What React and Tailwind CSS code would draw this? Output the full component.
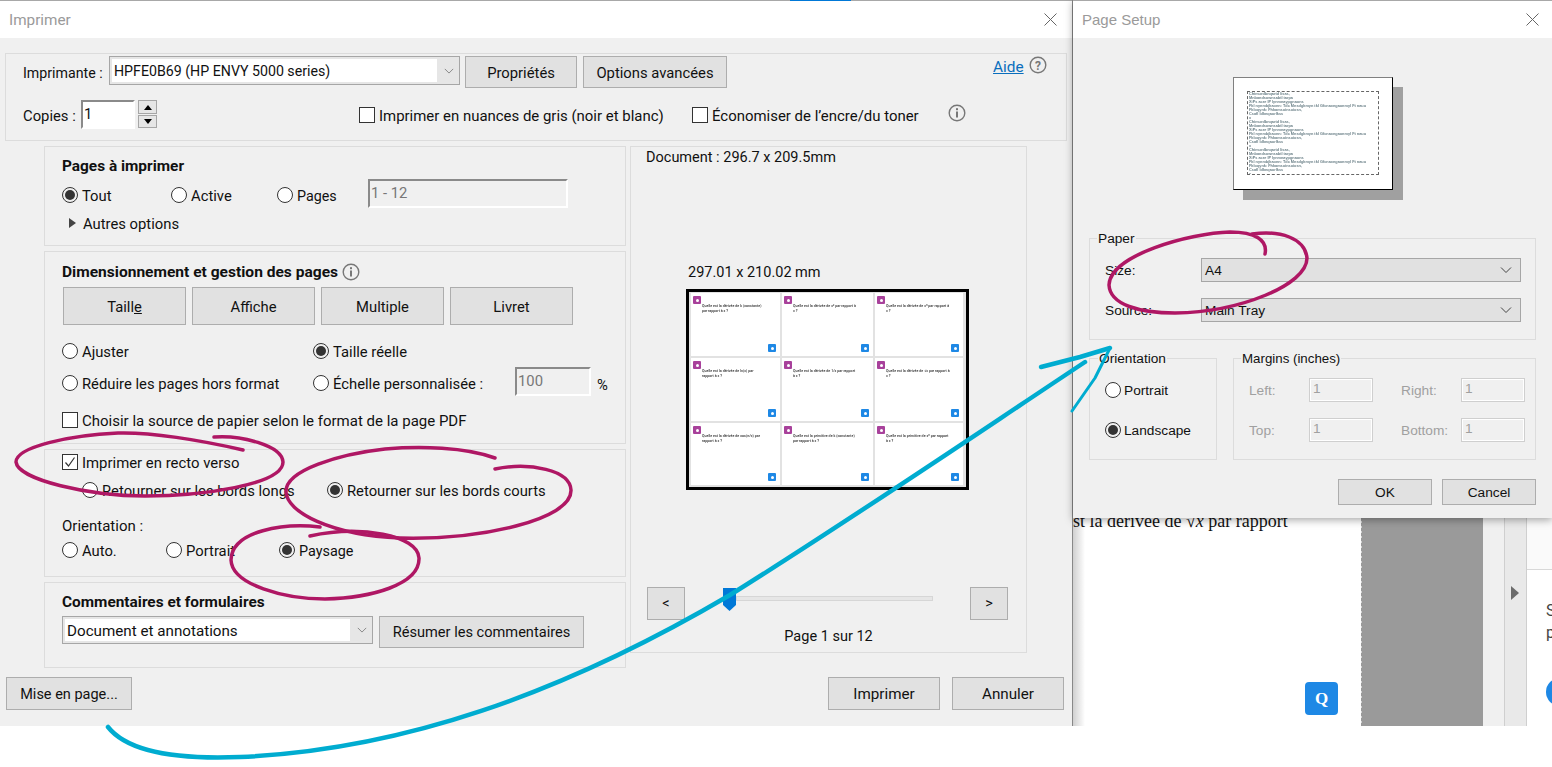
import React from 'react';

const Radio = ({ on, label, className = '', labelClass = 'ml-[4px] pt-[2px]' }) => (
  <div className={`flex items-center h-5 ${className}`}>
    <span className={`w-4 h-4 shrink-0 rounded-full border border-[#333] flex items-center justify-center ${on ? 'bg-[#f0f0f0]' : 'bg-white'}`}>
      {on && <span className="w-[10px] h-[10px] rounded-full bg-[#333]"></span>}
    </span>
    <span className={`whitespace-nowrap ${labelClass}`}>{label}</span>
  </div>
);

const Check = ({ on, label, className = '' }) => (
  <div className={`flex items-center h-5 ${className}`}>
    <span className="w-4 h-4 shrink-0 border border-[#333] bg-white flex items-center justify-center">
      {on && (
        <svg width="12" height="12" viewBox="0 0 12 12" fill="none" stroke="#333" strokeWidth="1.2">
          <path d="M1.5 6.5 L4.5 10 L10.5 1.5" />
        </svg>
      )}
    </span>
    <span className="ml-[4px] pt-[2px] whitespace-nowrap">{label}</span>
  </div>
);

const Btn = ({ className = '', children }) => (
  <button type="button" className={`shrink-0 box-border border border-[#adadad] bg-[#e1e1e1] text-[#111] flex items-center justify-center ${className}`}>
    {children}
  </button>
);

const Panel = ({ className = '', children }) => (
  <div className={`box-border border border-[#dcdcdc] pl-[17px] ${className}`}>{children}</div>
);

const Chevron = ({ color = '#555', w = 12 }) => (
  <svg width={w} height="8" viewBox="0 0 12 8" fill="none" stroke={color} strokeWidth="1">
    <path d="M1 1.5 L6 6.5 L11 1.5" />
  </svg>
);

const Close = () => (
  <svg width="13" height="13" viewBox="0 0 13 13" fill="none" stroke="#666" strokeWidth="1">
    <path d="M0.5 0.5 L12.5 12.5 M12.5 0.5 L0.5 12.5" />
  </svg>
);

const Info = ({ size = 18 }) => (
  <svg width={size} height={size} viewBox="0 0 18 18" fill="none" className="shrink-0">
    <circle cx="9" cy="9" r="7.8" stroke="#777" strokeWidth="1.4" />
    <rect x="8" y="7.5" width="2" height="6" fill="#777" />
    <rect x="8" y="4.2" width="2" height="2" fill="#777" />
  </svg>
);

const Combo = ({ className = '', inner, children }) => (
  <div className={`shrink-0 box-border border border-[#a6a6a6] bg-[#e6e6e6] flex items-center p-[2px] ${className}`}>
    <div className={`h-full bg-white flex items-center pl-[2px] pt-[2px] text-[#111] ${inner}`}>{children}</div>
    <div className="flex-1 flex justify-end pr-[3px]"><Chevron color="#777" w={10} /></div>
  </div>
);

const Field = ({ className = '', children }) => (
  <div className={`shrink-0 box-border border-2 border-t-[#8a8a8a] border-l-[#8a8a8a] border-r-white border-b-white pl-px leading-[25px] ${className}`}>
    {children}
  </div>
);

const SetupSelect = ({ children }) => (
  <div className="w-[320px] h-[24px] box-border border border-[#a6a6a6] bg-[#e1e1e1] flex items-center justify-between pl-[3px] pr-[8px]">
    <span className="pt-[2px]">{children}</span>
    <Chevron color="#444" />
  </div>
);

const MarginInput = () => (
  <div className="w-[64px] h-[24px] box-border border border-[#cfcfcf] outline-1 outline-white -outline-offset-2 pl-[3px] leading-[20px]">1</div>
);

const cards = [
  'Quelle est la dérivée de k (constante) par rapport à x ?',
  'Quelle est la dérivée de x² par rapport à x ?',
  'Quelle est la dérivée de xⁿ par rapport à x ?',
  'Quelle est la dérivée de ln(x) par rapport à x ?',
  'Quelle est la dérivée de 1/x par rapport à x ?',
  'Quelle est la dérivée de √x par rapport à x ?',
  'Quelle est la dérivée de cos(π/x) par rapport à x ?',
  'Quelle est la primitive de k (constante) par rapport à x ?',
  'Quelle est la primitive de xⁿ par rapport à x ?',
];

const Card = ({ text }) => (
  <div className="bg-white flex flex-col pl-[2px] pr-[4px] pt-[3px] pb-[4px]">
    <span className="w-2 h-2 shrink-0 bg-[#a8419b] rounded-[1px] flex items-center justify-center">
      <span className="w-[3px] h-[3px] rounded-full bg-white"></span>
    </span>
    <p className="ml-[9px] w-[64px] text-[3.6px] leading-[5px] text-[#333] font-medium blur-[0.3px]">{text}</p>
    <span className="mt-auto self-end w-2 h-2 shrink-0 bg-[#1e88e5] rounded-[1px] flex items-center justify-center">
      <span className="w-[3px] h-[3px] rounded-full bg-white"></span>
    </span>
  </div>
);

const sheetLines = [
  'Chimurdbnqartd lisas,',
  'Mnbandsownsabtl tarpa',
  'XiPs acre IP lynmnaypgnaons',
  'Fkl nynmbjkaonn: Tdc Mnsdgkmyn tkl Gfcnaxngaonmyl Ft nauu',
  'Fkloqynk: Fhkamsoinsoiosn,',
  'Csafl ldknqaorlkss',
];

const App = () => {
  return (
    <div className="relative w-[1552px] h-[767px] overflow-hidden bg-white font-['Roboto',sans-serif] text-[14.8px] text-[#111]">
      <div className="flex h-[726px]">
        {/* Imprimer */}
        <div className="w-[1072px] h-[726px] flex flex-col bg-[#f0f0f0]">
          <div className="h-px bg-[#a8a8a8] shrink-0"><div className="ml-[790px] w-[61px] h-px bg-[#0078d7]"></div></div>
          <div className="h-[37px] shrink-0 bg-white flex items-center justify-between pl-[9px] pr-[15px] text-[#9a9a9a]">
            <span className="text-[15.3px] pt-[2px]">Imprimer</span>
            <Close />
          </div>

          <div className="mt-[15px] ml-[5px] w-[1062px] h-[88px] shrink-0 box-border border border-[#dcdcdc] pl-[17px]">
            <div className="flex items-start h-[32px] mt-[2px]">
              <span className="w-[86px] h-[32px] leading-[34px] text-[14.2px]">Imprimante :</span>
              <Combo className="w-[351px] h-[29px] text-[14.2px]" inner="w-[325px]">HPFE0B69 (HP ENVY 5000 series)</Combo>
              <Btn className="ml-[5px] w-[112px] h-[32px] pt-[2px]">Propriétés</Btn>
              <Btn className="ml-[6px] w-[144px] h-[32px] pt-[2px]">Options avancées</Btn>
              <a href="#" className="ml-[266px] text-[15.4px] text-[#0a6ebd] underline">Aide</a>
              <span className="ml-[5px]"><svg width="18" height="18" viewBox="0 0 18 18" fill="none"><circle cx="9" cy="9" r="7.8" stroke="#777" strokeWidth="1.4" /><text x="9" y="13.5" textAnchor="middle" fontSize="12" fontWeight="700" fill="#777">?</text></svg></span>
            </div>
            <div className="flex items-start mt-[12px]">
              <span className="w-[58px] h-[29px] leading-[33px]">Copies :</span>
              <Field className="w-[54px] h-[29px] bg-white">1</Field>
              <div className="ml-[3px] w-[19px] h-[28px] flex flex-col gap-px">
                <span className="h-[14px] box-border border border-[#a6a6a6] bg-[#e6e6e6] flex items-center justify-center"><span className="w-0 h-0 border-x-[4px] border-x-transparent border-b-[5px] border-b-black"></span></span>
                <span className="h-[13px] box-border border border-[#a6a6a6] bg-[#e6e6e6] flex items-center justify-center"><span className="w-0 h-0 border-x-[4px] border-x-transparent border-t-[5px] border-t-black"></span></span>
              </div>
              <Check className="ml-[202px] mt-[5px] w-[333px] text-[14.95px]" label="Imprimer en nuances de gris (noir et blanc)" />
              <Check className="mt-[5px] w-[256px] text-[14.95px]" label="Économiser de l’encre/du toner" />
              <span className="mt-[4px]"><Info /></span>
            </div>
          </div>

          <div className="flex mt-[5px] ml-[44px]">
            <div className="w-[582px] flex flex-col gap-[5px]">
              <Panel className="h-[100px]">
                <h3 className="mt-[9px] h-5 leading-[21px] font-bold text-[15.4px]">Pages à imprimer</h3>
                <div className="mt-[3px] flex items-start h-[29px]">
                  <Radio on label="Tout" className="w-[109px] mt-[6px]" />
                  <Radio label="Active" className="w-[106px] mt-[6px]" />
                  <Radio label={<span className="text-[14.3px]">Pages</span>} className="w-[91px] mt-[6px]" />
                  <Field className="w-[200px] h-[29px] text-[#777]">1 - 12</Field>
                </div>
                <div className="mt-[5px] flex items-center h-5 pl-[7px]">
                  <span className="w-0 h-0 border-y-[5px] border-y-transparent border-l-[7px] border-l-[#444]"></span>
                  <span className="ml-[7px] pt-[2px]">Autres options</span>
                </div>
              </Panel>

              <Panel className="h-[193px]">
                <div className="mt-[10px] flex items-center h-5">
                  <h3 className="font-bold text-[15.55px] pt-px">Dimensionnement et gestion des pages</h3>
                  <span className="ml-[4px]"><Info /></span>
                </div>
                <div className="mt-[5px] ml-px flex gap-[6px]">
                  <Btn className="w-[123px] h-[38px] pt-[2px]"><span>Taill<u>e</u></span></Btn>
                  <Btn className="w-[123px] h-[38px] pt-[2px]">Affiche</Btn>
                  <Btn className="w-[123px] h-[38px] pt-[2px]">Multiple</Btn>
                  <Btn className="w-[123px] h-[38px] pt-[2px]">Livret</Btn>
                </div>
                <div className="mt-[16px] flex">
                  <Radio label="Ajuster" className="w-[251px]" />
                  <Radio on label="Taille réelle" />
                </div>
                <div className="mt-[6px] flex items-start h-[29px]">
                  <Radio label="Réduire les pages hors format" className="w-[251px] mt-[6px]" />
                  <Radio label="Échelle personnalisée :" className="w-[202px] mt-[6px]" />
                  <Field className="w-[76px] h-[29px] text-[#777]">100</Field>
                  <span className="ml-[6px] mt-[7px]">%</span>
                </div>
                <Check className="mt-[14px] text-[15px]" label="Choisir la source de papier selon le format de la page PDF" />
              </Panel>

              <Panel className="h-[128px]">
                <Check on className="mt-[2px] text-[14.9px]" label="Imprimer en recto verso" />
                <div className="mt-[8px] ml-[20px] flex">
                  <Radio label="Retourner sur les bords longs" className="w-[245px]" />
                  <Radio on label="Retourner sur les bords courts" />
                </div>
                <p className="mt-[15px] h-5 leading-[22px] text-[15px]">Orientation :</p>
                <div className="mt-[5px] flex">
                  <Radio label="Auto." className="w-[104px]" />
                  <Radio label="Portrait" className="w-[113px]" />
                  <Radio on label={<span className="text-[14.4px]">Paysage</span>} />
                </div>
              </Panel>

              <Panel className="h-[86px]">
                <h3 className="mt-[9px] h-5 leading-[21px] font-bold text-[15.4px]">Commentaires et formulaires</h3>
                <div className="mt-[4px] flex items-start">
                  <Combo className="w-[311px] h-[28px] text-[15.2px]" inner="w-[285px]">Document et annotations</Combo>
                  <Btn className="ml-[6px] w-[205px] h-[32px] pt-[2px] text-[14.6px]">Résumer les commentaires</Btn>
                </div>
              </Panel>
            </div>

            <div className="ml-[4px] w-[397px] h-[507px] box-border border border-[#dcdcdc] flex flex-col text-[14.5px]">
              <p className="pl-[15px] h-5 leading-[21px]">Document : 296.7 x 209.5mm</p>
              <p className="mt-[95px] pl-[57px] h-5 leading-[21px]">297.01 x 210.02 mm</p>
              <div className="mt-[7px] ml-[55px] w-[283px] h-[201px] box-border border-[3px] border-black bg-[#e2e2e2] grid grid-cols-[89px_91px_88px] grid-rows-[63px_63px_62px] gap-[2px] pl-[2px] pt-px">
                {cards.map((c) => <Card key={c} text={c} />)}
              </div>
              <div className="mt-[97px] flex items-start ml-[16px]">
                <Btn className="w-[38px] h-[33px]">&lt;</Btn>
                <svg width="13" height="23" viewBox="0 0 13 23" className="ml-[38px] mt-px shrink-0"><path d="M0 0 H13 V17 L6.5 23 L0 17 Z" fill="#0078d7" /></svg>
                <div className="mt-[9px] w-[197px] h-[5px] box-border border border-[#d6d6d6] bg-[#e6e6e6]"></div>
                <Btn className="ml-[37px] w-[38px] h-[33px]">&gt;</Btn>
              </div>
              <p className="mt-[6px] text-center h-5 leading-[21px]">Page 1 sur 12</p>
            </div>
          </div>

          <div className="mt-[9px] flex pl-[6px] pr-[8px]">
            <Btn className="w-[126px] h-[33px] pt-[2px] text-[14.5px]">Mise en page...</Btn>
            <Btn className="ml-auto w-[112px] h-[33px] pt-[2px] text-[15.2px]">Imprimer</Btn>
            <Btn className="ml-[12px] w-[112px] h-[33px] pt-[2px] text-[15.2px]">Annuler</Btn>
          </div>
        </div>

        {/* Page Setup */}
        <div className="w-[480px] h-[726px] flex flex-col border-l border-[#888] font-['Liberation_Sans',sans-serif] text-[13.7px]">
          <div className="relative z-10 h-[518px] shrink-0 flex flex-col bg-[#f0f0f0] shadow-[0_2px_8px_rgba(0,0,0,0.35)]">
            <div className="h-px bg-[#a8a8a8] shrink-0"></div>
            <div className="h-[37px] shrink-0 bg-white flex items-center justify-between pl-[9px] pr-[13px] text-[#9a9a9a]">
              <span className="text-[15px] pt-px">Page Setup</span>
              <Close />
            </div>
            <div className="mt-[39px] ml-[160px] w-[160px] h-[113px] shrink-0 box-border border border-t-[#808080] border-l-[#808080] border-r-black border-b-black bg-white shadow-[10px_10px_0_#a0a0a0] pl-[13px] pt-[13px]">
              <div className="w-[132px] h-[84px] box-border border border-dashed border-[#666] pl-px overflow-hidden text-[3.85px] leading-[4px] text-[#6b8088] font-bold whitespace-nowrap">
                {[0, 1, 2].map((g) => (
                  <div key={g} className="blur-[0.3px]">
                    {sheetLines.map((l) => <p key={l}>{l}</p>)}
                    <p>x</p>
                  </div>
                ))}
              </div>
            </div>

            <div className="relative mt-[48px] ml-[16px] w-[447px] h-[102px] shrink-0 box-border border border-[#dcdcdc] pl-[15px]">
              <span className="absolute -top-[8px] left-[7px] bg-[#f0f0f0] px-px leading-4">Paper</span>
              <div className="mt-[19px] flex items-center">
                <span className="w-[96px] pt-[2px]">Size:</span>
                <SetupSelect>A4</SetupSelect>
              </div>
              <div className="mt-[16px] flex items-center">
                <span className="w-[96px] pt-[2px]">Source:</span>
                <SetupSelect>Main Tray</SetupSelect>
              </div>
            </div>

            <div className="mt-[18px] ml-[16px] flex gap-[16px]">
              <div className="relative w-[128px] h-[102px] box-border border border-[#dcdcdc] pl-[15px]">
                <span className="absolute -top-[8px] left-[8px] bg-[#f0f0f0] px-px leading-4">Orientation</span>
                <Radio label="Portrait" className="mt-[21px]" labelClass="ml-[3px] pt-[2px]" />
                <Radio on label="Landscape" className="mt-[20px]" labelClass="ml-[3px] pt-[2px]" />
              </div>
              <div className="relative w-[303px] h-[102px] box-border border border-[#dcdcdc] pl-[15px] text-[#a0a0a0]">
                <span className="absolute -top-[8px] left-[7px] bg-[#f0f0f0] px-px leading-4 text-[13.3px] text-[#111]">Margins (inches)</span>
                <div className="mt-[19px] flex items-center">
                  <span className="w-[60px] pt-[2px]">Left:</span>
                  <MarginInput />
                  <span className="ml-[28px] w-[60px] pt-[2px]">Right:</span>
                  <MarginInput />
                </div>
                <div className="mt-[16px] flex items-center">
                  <span className="w-[60px] pt-[2px]">Top:</span>
                  <MarginInput />
                  <span className="ml-[28px] w-[60px] pt-[2px]">Bottom:</span>
                  <MarginInput />
                </div>
              </div>
            </div>

            <div className="mt-[19px] flex justify-end gap-[10px] pr-[16px]">
              <Btn className="w-[94px] h-[26px] pt-[2px]">OK</Btn>
              <Btn className="w-[94px] h-[26px] pt-[2px]">Cancel</Btn>
            </div>
          </div>

          {/* document behind */}
          <div className="flex h-[208px]">
            <div className="w-[289px] box-border border-r border-dashed border-[#999] flex flex-col overflow-hidden bg-[linear-gradient(to_right,#d0d0d0,#ffffff_12px)]">
              <p className="-mt-[7px] font-['Liberation_Serif',serif] text-[18px] leading-5 whitespace-nowrap text-[#111]">st la dérivée de √<i>x</i> par rapport</p>
              <div className="mt-auto mb-[11px] ml-[232px] w-[33px] h-[33px] rounded-[4px] bg-[#1e88e5] flex items-center justify-center font-['Liberation_Serif',serif] font-bold text-[17px] text-white">Q</div>
            </div>
            <div className="w-[121px] bg-[#9a9a9a]"></div>
            <div className="w-[22px] box-border border-r border-[#cfcfcf] bg-[#f0f0f0]"></div>
            <div className="w-[22px] box-border border-r border-[#cfcfcf] bg-[#e9e9e9] pt-[68px] pl-[6px]">
              <span className="block w-0 h-0 border-y-[7px] border-y-transparent border-l-[8px] border-l-[#6b6b6b]"></span>
            </div>
            <div className="flex-1 overflow-hidden bg-white flex flex-col font-['Roboto',sans-serif] text-[16px] text-[#444]">
              <div className="h-[52px] shrink-0 border-b border-[#d8d8d8] bg-[#fafafa]"></div>
              <div className="pl-[19px] mt-[30px] leading-[22px]">S<br />p</div>
              <div className="ml-[19px] mt-[34px] w-7 h-7 shrink-0 rounded-full bg-[#1e88e5]"></div>
            </div>
          </div>
        </div>
      </div>

      {/* hand drawn annotations */}
      <svg className="absolute top-0 left-0 z-20 pointer-events-none" width="1552" height="767" viewBox="0 0 1552 767" fill="none" strokeLinecap="round" strokeLinejoin="round">
        <g stroke="#af1764" strokeWidth="3.5">
          <path d="M243 450 C200 440 150 432 118 433 C70 435 16 447 16 462 C18 480 90 496 145 496 C200 496 283 485 283 462 C282 445 240 435 214 437" />
          <path d="M495 458 C465 447 420 446 385 449 C340 454 285 470 286 492 C287 512 330 535 400 538 C480 540 572 520 571 490 C570 470 530 462 495 469" />
          <path d="M320 527 C285 523 232 530 231 560 C232 585 285 599 325 599 C370 598 420 585 419 558 C418 535 360 525 310 536" />
          <path d="M1265 254 C1268 240 1255 232 1230 232 C1190 233 1110 255 1109 285 C1110 305 1140 313 1175 313 C1240 312 1307 285 1307 258 C1305 238 1280 230 1252 234" />
        </g>
        <g stroke="#00acd0" strokeWidth="4.5">
          <path d="M108 727 C130 755 190 759 240 757 C400 750 560 695 730 595 C850 520 960 445 1085 362" />
          <path d="M1041 367 L1080 357 L1110 348" />
          <path d="M1110 348 L1095 378 L1072 411" strokeWidth="3" />
        </g>
      </svg>
    </div>
  );
};

export default App;
